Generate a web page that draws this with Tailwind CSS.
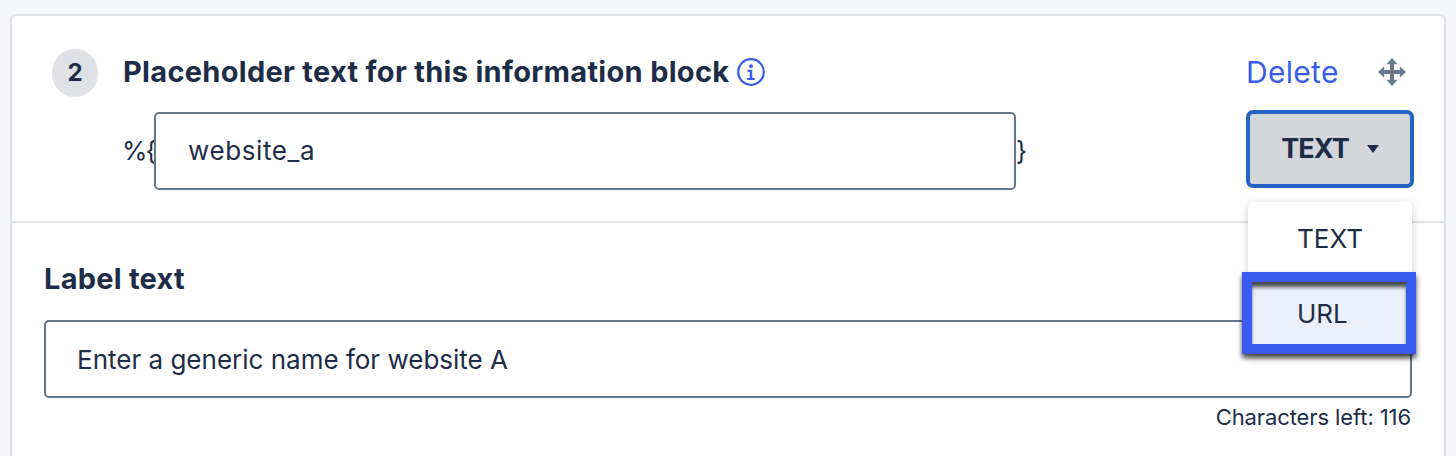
<!doctype html>
<html>
<head>
<meta charset="utf-8">
<script src="https://cdn.jsdelivr.net/npm/@tailwindcss/browser@4"></script>
</head>
<body class="m-0 bg-[#f6f7f9] h-[456px] w-[1456px] overflow-hidden font-['Inter','Liberation_Sans',sans-serif] text-[#1e2d47]">
<div class="ml-[10px] mr-[10px] mt-[14px] h-[460px] bg-white border-2 border-b-0 border-[#e1e2e6] rounded-t-[5px] flex flex-col">
  <section class="h-[207px] shrink-0 border-b-2 border-[#e1e2e6] pl-[40px] pr-[30px] pt-[33px] flex justify-between relative">
    <div class="flex gap-[25px]">
      <div class="w-[46px] h-[48px] rounded-full bg-[#e0e1e5] flex items-center justify-center text-[24px] font-bold">2</div>
      <div>
        <div class="flex items-center h-[46px] gap-[7px]">
          <h2 class="text-[29px] leading-[46px] font-bold m-0 tracking-[0.3px]">Placeholder text for this information block</h2>
          <svg class="w-[30px] h-[30px]" viewBox="0 0 30 30" fill="none"><circle cx="15" cy="15" r="12.8" stroke="#3a5bef" stroke-width="2.200"/><circle cx="15" cy="9.200" r="1.900" fill="#3a5bef"/><path d="M11.400 12.800h4.800v8.200h2.600v2h-7.600v-2h2.600v-6.200h-2.400z" fill="#3a5bef"/></svg>
        </div>
        <div class="flex items-center mt-[17px] text-[26px] leading-[34px]">
          <span class="w-[31px] -ml-[1px] mr-[1px] tracking-[-2px] whitespace-nowrap">%{</span>
          <div class="w-[862px] h-[78px] border-2 border-[#68768a] rounded-[5px] flex items-center pl-[32px] text-[26px] tracking-[0.6px]">website_a</div>
          <span>}</span>
        </div>
      </div>
    </div>
    <div class="w-[168px] flex flex-col">
      <div class="flex items-center justify-between h-[46px] pr-[7px]">
        <a class="text-[30px] text-[#3a5bef] tracking-[0.3px]">Delete</a>
        <svg class="w-[30px] h-[30px]" viewBox="0 0 30 30" fill="#68768a"><path d="M15 1l5.500 6.200h-3.500v5.800h5.800V9.500L29 15l-6.200 5.500V17H17v5.800h3.500L15 29l-5.500-6.200H13V17H7.200v3.500L1 15l6.200-5.500V13H13V7.200H9.500z"/></svg>
      </div>
      <button class="mt-[15px] w-[168px] h-[78px] rounded-[7px] border-[4px] border-[#2563c4] bg-[#d5d6da] flex items-center justify-center gap-[18px] text-[27px] font-bold tracking-[-1px]">
        <span>TEXT</span>
        <svg class="w-[12px] h-[8px]" viewBox="0 0 12 8" fill="#1e2d47"><path d="M0 0h12L6 8z"/></svg>
      </button>
    </div>
  </section>
  <section class="pl-[32px] pr-[32px] pt-[38px] flex flex-col">
    <label class="text-[29px] leading-[36px] font-bold tracking-[0.25px]">Label text</label>
    <div class="mt-[23px] h-[78px] border-2 border-[#68768a] rounded-[5px] flex items-center pl-[31px] text-[26px]">Enter a generic name for website A</div>
    <div class="mt-[5px] text-right text-[22px] leading-[28px] pr-[1px] tracking-[-0.1px]">Characters left: 116</div>
  </section>
  <ul class="absolute left-[1248px] top-[202px] w-[164px] m-0 p-0 list-none bg-white rounded-[5px] shadow-[0_2px_10px_rgba(0,0,0,0.2)] text-[26px]">
    <li class="h-[70px] pt-[2px] flex items-center justify-center">TEXT</li>
    <li class="h-[82px] -ml-[6px] -mr-[4px] bg-[#ecf0fb] border-[10px] border-[#3a5bef] flex items-center pl-[45px] shadow-[inset_0_6px_4px_-1px_rgba(0,0,0,0.7),0_4px_5px_rgba(0,0,0,0.7)]">URL</li>
  </ul>
</div>
</body>
</html>
